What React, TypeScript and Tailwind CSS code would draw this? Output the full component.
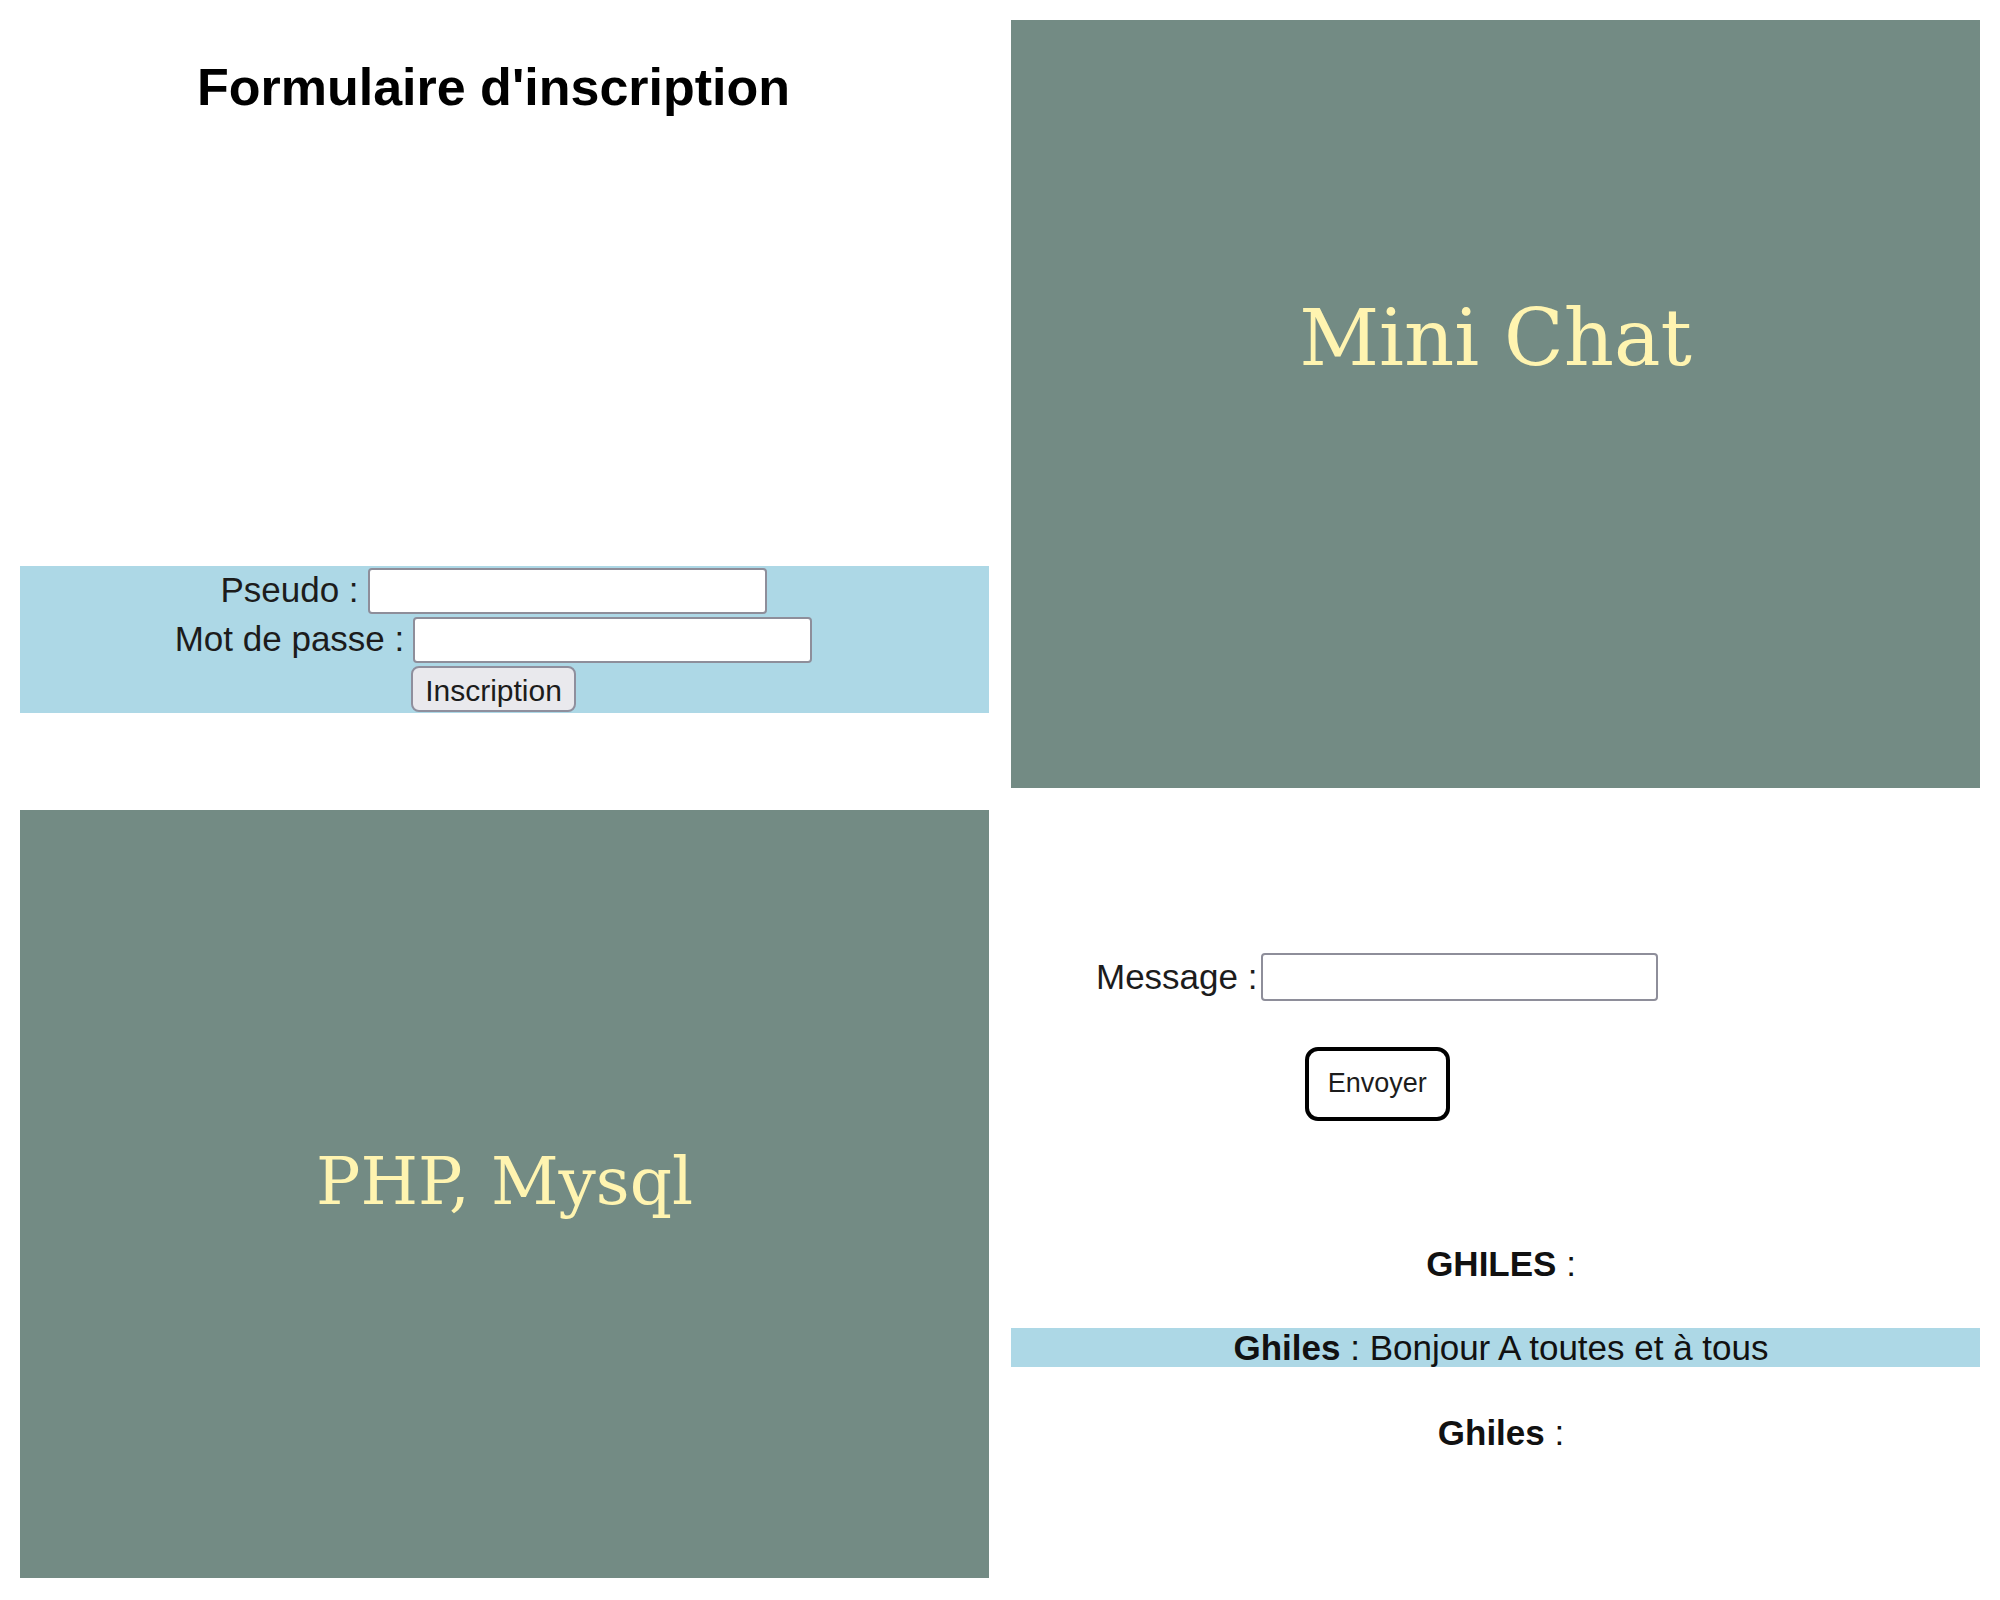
import React from 'react'

const sans = { fontFamily: '"Liberation Sans", Arial, sans-serif' }

function Field({ label }: { label: string }) {
  return (
    <div className="flex h-[49px] items-center gap-[9px]">
      <span className="text-[35px] text-[#1c1c1c]">{label}</span>
      <input
        type="text"
        className="h-[46px] w-[399px] rounded-[4px] border-2 border-[#8e8e9a] bg-white"
      />
    </div>
  )
}

export default function App() {
  return (
    <div
      className="grid h-[1600px] w-[2000px] grid-cols-2 grid-rows-[768px_768px] gap-x-[22px] gap-y-[22px] bg-white px-[20px] pt-[20px]"
      style={sans}
    >
      {/* Formulaire */}
      <div className="flex flex-col">
        <h2 className="mt-[37px] pr-[22px] text-center text-[52px] font-bold leading-[60px] text-black">
          Formulaire d'inscription
        </h2>
        <form className="mt-[449px] flex flex-col items-center bg-[#add8e6] pr-[22px]">
          <Field label="Pseudo :" />
          <Field label="Mot de passe :" />
          <div className="flex h-[49px] items-center">
            <button
              type="button"
              className="h-[46px] w-[165px] rounded-[8px] border-2 border-[#8f8f9d] bg-[#e9e9ed] text-[30px] text-[#1c1c1c]"
            >
              Inscription
            </button>
          </div>
        </form>
      </div>

      {/* Mini Chat */}
      <div className="flex flex-col items-center bg-[#738b84] pt-[279px]">
        <h1
          className="text-[78px] leading-[78px] text-[#fff4b0]"
          style={{ fontFamily: '"DejaVu Serif", serif' }}
        >
          Mini Chat
        </h1>
      </div>

      {/* PHP, Mysql */}
      <div className="flex flex-col items-center bg-[#738b84] pt-[339px]">
        <h1
          className="text-[66px] leading-[66px] text-[#fff4b0]"
          style={{ fontFamily: '"DejaVu Serif", serif' }}
        >
          PHP, Mysql
        </h1>
      </div>

      {/* Messages */}
      <div className="flex flex-col">
        <form className="ml-[85px] mt-[141px] flex w-fit flex-col items-center">
          <div className="flex items-center gap-[4px]">
            <span className="text-[35px] text-[#1c1c1c]">Message :</span>
            <input
              type="text"
              className="h-[48px] w-[397px] rounded-[4px] border-2 border-[#8e8e9a] bg-white"
            />
          </div>
          <button
            type="button"
            className="mt-[43px] h-[74px] w-[145px] rounded-[13px] border-[4px] border-black bg-white text-[27px] text-[#1c1c1c]"
          >
            Envoyer
          </button>
        </form>

        <p className="mt-[123px] pl-[11px] text-center text-[35px] leading-[39px] text-[#111]">
          <b>GHILES</b> :
        </p>
        <p className="mt-[45px] bg-[#add8e6] pl-[11px] text-center text-[35px] leading-[39px] text-[#111]">
          <b>Ghiles</b> : Bonjour A toutes et à tous
        </p>
        <p className="mt-[46px] pl-[11px] text-center text-[35px] leading-[39px] text-[#111]">
          <b>Ghiles</b> :
        </p>
      </div>
    </div>
  )
}
